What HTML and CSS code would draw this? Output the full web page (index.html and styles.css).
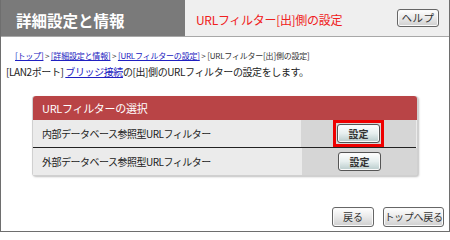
FILE: index.html
```html
<!DOCTYPE html>
<html lang="ja">
<head>
<meta charset="utf-8">
<link rel="stylesheet" href="styles.css">
</head>
<body>
<div class="window">
  <div class="header">
    <div class="title">詳細設定と情報</div>
    <div class="subtitle">
      <span class="page-name">URLフィルター[出]側の設定</span>
      <button class="btn help">ヘルプ</button>
    </div>
  </div>
  <div class="content">
    <div class="crumbs"><a href="#">[トップ]</a> &gt; <a href="#">[詳細設定と情報]</a> &gt; <a href="#">[URLフィルターの設定]</a> &gt; [URLフィルター[出]側の設定]</div>
    <div class="desc">[LAN2ポート] <a href="#">ブリッジ接続</a>の[出]側のURLフィルターの設定をします。</div>
    <div class="panel">
      <div class="panel-head">URLフィルターの選択</div>
      <div class="row first">
        <div class="label">内部データベース参照型URLフィルター</div>
        <div class="action"><span class="mark"><button class="btn set">設定</button></span></div>
      </div>
      <div class="row">
        <div class="label">外部データベース参照型URLフィルター</div>
        <div class="action"><button class="btn set">設定</button></div>
      </div>
    </div>
    <div class="footer">
      <button class="btn back">戻る</button>
      <button class="btn top">トップへ戻る</button>
    </div>
  </div>
</div>
</body>
</html>
```
FILE: styles.css
```css
html, body {
  margin: 0;
  padding: 0;
  background: #ffffff;
}
body {
  font-family: "Noto Sans CJK JP", "Noto Sans", sans-serif;
  color: #222;
}
.window {
  width: 450px;
  height: 232px;
  box-sizing: border-box;
  border: 1px solid #6e6e6e;
  border-top: none;
  display: flex;
  flex-direction: column;
}
.header {
  display: flex;
  height: 37px;
  box-sizing: border-box;
  border-bottom: 1px solid #a8a8a8;
}
.title {
  width: 184px;
  background: #7a7a7a;
  color: #ffffff;
  font-weight: bold;
  font-size: 15.5px;
  padding-left: 15px;
  box-sizing: border-box;
  display: flex;
  align-items: center;
  padding-top: 3px;
}
.subtitle {
  flex: 1;
  background: #efefef;
  display: flex;
  align-items: center;
  justify-content: space-between;
  padding: 2px 10px 0 11px;
}
.page-name {
  color: #f02020;
  font-size: 12px;
  letter-spacing: -0.3px;
}
.btn {
  font-family: inherit;
  font-size: 10px;
  color: #333;
  border: 1px solid #666;
  border-radius: 3px;
  background: linear-gradient(#ffffff, #e9e9e9 50%, #cfcfcf);
  box-shadow: inset 0 0 0 1px #fafafa;
  padding: 0;
  line-height: 1;
  white-space: nowrap;
  cursor: pointer;
}
.help {
  width: 42px;
  height: 18px;
  font-size: 10.5px;
  margin-top: -2px;
  letter-spacing: 0.5px;
}
.content {
  flex: 1;
  display: flex;
  flex-direction: column;
}
.crumbs {
  font-size: 8px;
  padding: 13px 0 0 14px;
  line-height: 11px;
  color: #333;
  letter-spacing: -0.2px;
}
.crumbs a, .desc a {
  color: #2020c0;
}
.desc {
  font-size: 10px;
  letter-spacing: -0.4px;
  padding: 4px 0 0 5px;
  line-height: 13px;
}
.panel {
  margin: 18px 0 0 31px;
  width: 386px;
  border-radius: 3px;
  border: 1px solid #d0d0d0;
  border-top: none;
  box-sizing: border-box;
  box-shadow: 1px 1px 2px rgba(0,0,0,0.25);
  background: #ebebeb;
}
.panel-head {
  height: 24px;
  background: #b94446;
  color: #ffffff;
  font-size: 11px;
  display: flex;
  align-items: center;
  padding-left: 9px;
  border-radius: 3px 3px 0 0;
  letter-spacing: -0.3px;
}
.row {
  display: flex;
  height: 27px;
}
.row.first {
  height: 28px;
  box-sizing: border-box;
  border-bottom: 1px solid #222;
  margin-right: 1px;
}
.label {
  flex: 1;
  font-size: 10px;
  letter-spacing: -0.5px;
  display: flex;
  align-items: center;
  padding-left: 9px;
  background: #ebebeb;
}
.action {
  width: 115px;
  background: #d6d6d6;
  display: flex;
  align-items: center;
  justify-content: center;
}
.mark {
  display: flex;
  border: 3px solid #ee0000;
  padding: 1px;
}
.set {
  width: 43px;
  height: 19px;
  font-weight: bold;
  font-size: 10px;
  border-color: #555;
  background: linear-gradient(#ffffff, #e6eeee 50%, #b8cbcb);
}
.footer {
  margin-top: auto;
  display: flex;
  justify-content: flex-end;
  gap: 9px;
  padding: 0 5px 4px 0;
}
.back {
  width: 42px;
  height: 20px;
}
.top {
  width: 61px;
  height: 20px;
  letter-spacing: -0.3px;
}
```
